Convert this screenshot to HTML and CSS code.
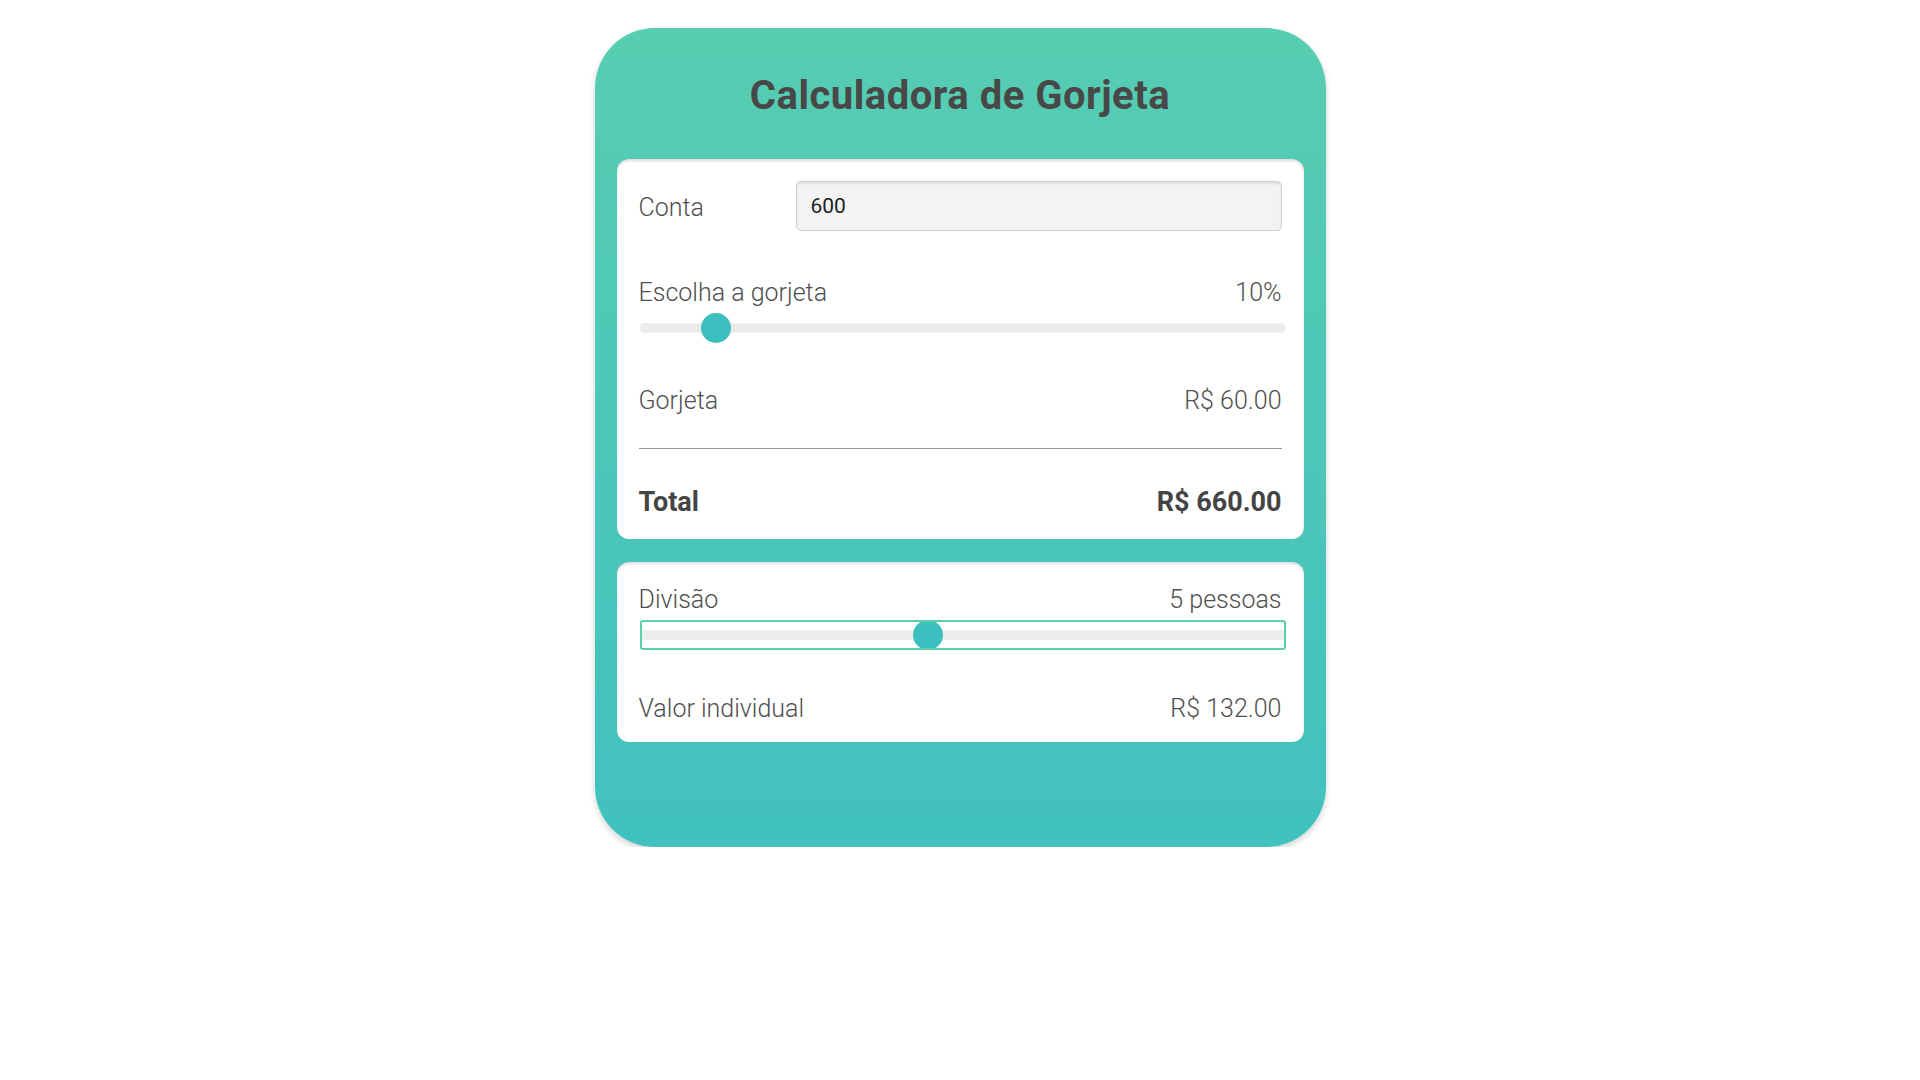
FILE: index.html
```html
<!DOCTYPE html>
<html lang="pt-BR">
<head>
<meta charset="utf-8">
<title>Calculadora de Gorjeta</title>
<link rel="stylesheet" href="styles.css">
</head>
<body>
<main class="page">
  <section class="calc">
    <h1 class="calc-title">Calculadora de Gorjeta</h1>
    <div class="panel panel-main">
      <div class="row row-input">
        <label class="label" for="conta">Conta</label>
        <input class="bill" id="conta" type="text" value="600">
      </div>
      <div class="row row-head">
        <span class="label">Escolha a gorjeta</span>
        <span class="value">10%</span>
      </div>
      <input class="range" type="range" min="0" max="100" value="10">
      <div class="row row-tip">
        <span class="label">Gorjeta</span>
        <span class="value">R$ 60.00</span>
      </div>
      <hr class="divider">
      <div class="row row-total">
        <span class="total">Total</span>
        <span class="total">R$ 660.00</span>
      </div>
    </div>
    <div class="panel panel-split">
      <div class="row row-head">
        <span class="label">Divisão</span>
        <span class="value">5 pessoas</span>
      </div>
      <input class="range range-focus" type="range" min="1" max="10" value="5">
      <div class="row row-each">
        <span class="label">Valor individual</span>
        <span class="value">R$ 132.00</span>
      </div>
    </div>
  </section>
</main>
</body>
</html>
```
FILE: styles.css
```css
* { box-sizing: border-box; }
html, body { margin: 0; padding: 0; background: #fff; }
body { font-family: Roboto, "Noto Sans", Arial, sans-serif; color: #555; }
.page { display: flex; justify-content: center; padding-top: 28px; }
.calc {
  width: 731px;
  height: 819px;
  border-radius: 60px;
  background: linear-gradient(to bottom, #57cdb1, #41c1bf);
  box-shadow: 0 3px 6px rgba(0,0,0,0.18);
  padding: 0 22px;
}
.calc-title {
  margin: 0;
  padding: 47px 0 42px;
  font-size: 40px;
  line-height: 42px;
  font-weight: 700;
  letter-spacing: 0.5px;
  text-align: center;
  color: #484848;
}
.panel {
  background: #fff;
  border-radius: 12px;
  box-shadow: inset 0 2px 3px rgba(0,0,0,0.14);
  padding: 0 22px;
}
.panel-main { height: 380px; padding-top: 22px; }
.panel-split { margin-top: 23px; height: 180px; padding-top: 21px; }
.row { display: flex; justify-content: space-between; align-items: center; }
.label, .value { font-size: 25px; font-weight: 300; line-height: 30px; padding-top: 2px; color: #4f4f4f; }
.row-input { height: 50px; }
.row-input .label { padding-top: 4px; }
.bill {
  width: 486px;
  height: 50px;
  margin: 0;
  border: 1px solid #cfcfcf;
  border-radius: 5px;
  background: #f3f3f3;
  box-shadow: inset 0 2px 2px rgba(0,0,0,0.08);
  padding: 0 14px;
  font-family: Roboto, sans-serif;
  font-size: 21px;
  color: #1e1e1e;
}
.panel-main .row-head { margin-top: 45px; }
.range {
  -webkit-appearance: none;
  appearance: none;
  display: block;
  width: 646px;
  height: 30px;
  margin: 5px 0 0 1px;
  background: transparent;
  border-radius: 3px;
}
.range::-webkit-slider-runnable-track {
  height: 10px;
  background: #ececec;
  border-radius: 5px;
}
.range::-webkit-slider-thumb {
  -webkit-appearance: none;
  appearance: none;
  width: 30px;
  height: 30px;
  border-radius: 50%;
  background: #3dbfbf;
  margin-top: -10px;
  border: none;
}
.range-focus { outline: 2px solid #5ad1a9; outline-offset: -2px; }
.row-tip { margin-top: 41px; }
.divider { margin: 32px 0 0; border: 0; border-top: 1px solid #9a9a9a; height: 0; }
.row-total { margin-top: 35px; }
.total { font-size: 27px; font-weight: 700; line-height: 32px; padding-top: 2px; color: #444; }
.row-each { margin-top: 42px; }
```
